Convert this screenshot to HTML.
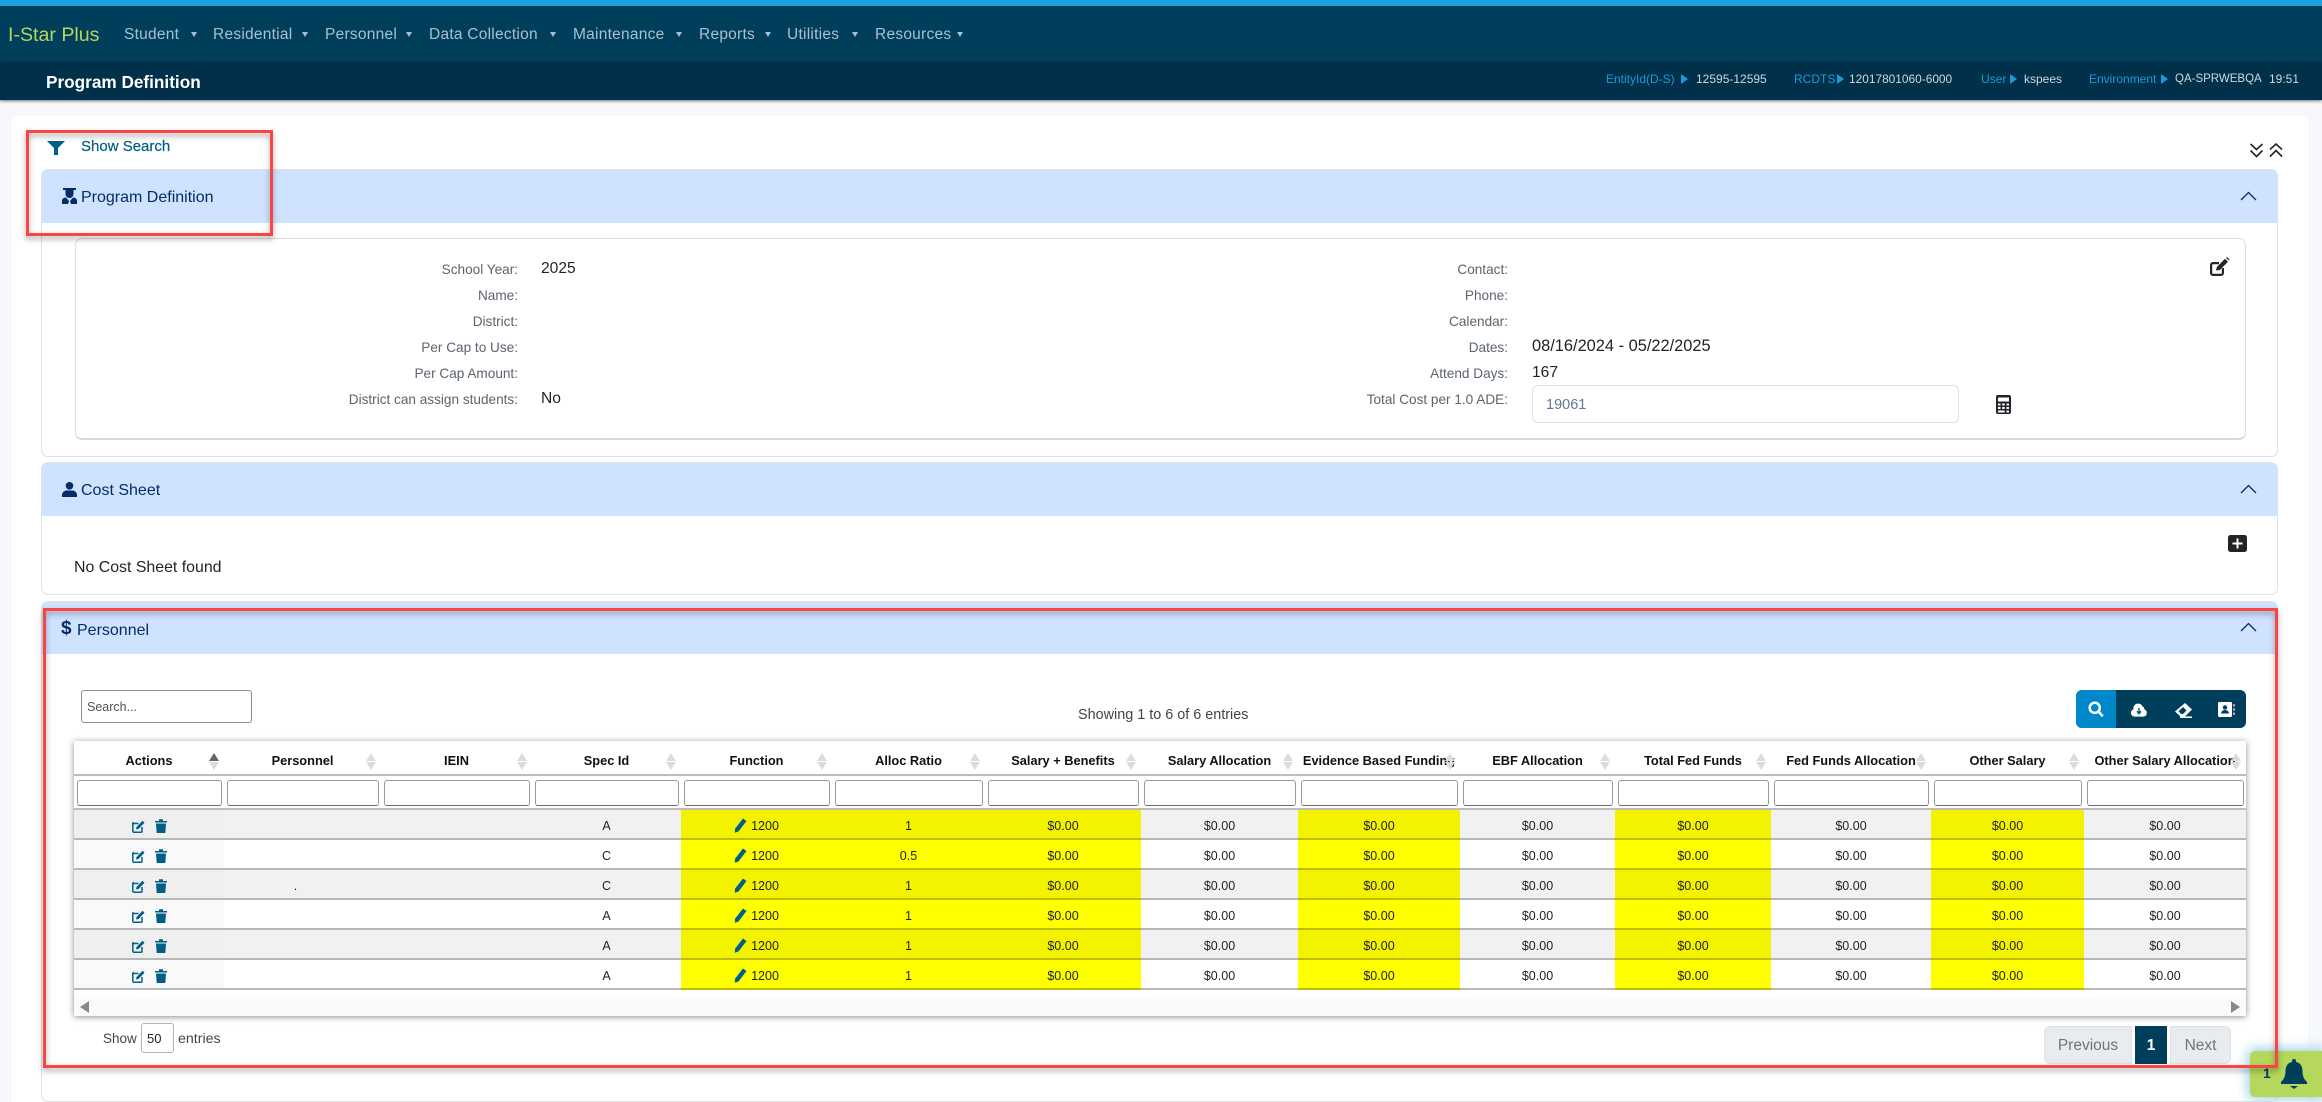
<!DOCTYPE html>
<html lang="en">
<head>
<meta charset="utf-8">
<title>Program Definition</title>
<style>
*{box-sizing:border-box}
html,body{margin:0;padding:0}
body{width:2322px;height:1102px;overflow:hidden;position:relative;background:#f6f8fb;font-family:"Liberation Sans",sans-serif;color:#212529}
.a{position:absolute}
.t{position:absolute;white-space:nowrap;line-height:20px;height:20px}
svg{display:block}
.nav{font-size:15.5px;color:#a8c0cd;top:25px;letter-spacing:.25px}
.car{position:absolute;top:32px;width:0;height:0;border-left:3.5px solid transparent;border-right:3.5px solid transparent;border-top:5px solid #a8c0cd}
.ib{font-size:12px;color:#1b9ad8;top:69px}
.iv{font-size:12px;color:#ccd8de;top:69px}
.arr{position:absolute;top:74px;width:0;height:0;border-top:5px solid transparent;border-bottom:5px solid transparent;border-left:7px solid #1b9ad8}
.item{position:absolute;left:41px;width:2237px;border:1px solid #dee2e6;border-radius:7px;background:#fff;overflow:hidden}
.hd{position:absolute;left:0;top:0;width:100%;height:53px;background:#cfe2ff}
.ht{font-size:16px;color:#052c65}
.lb{font-size:13.6px;color:#5b646e;text-align:right;width:300px}
.lr{left:218px}
.lr2{left:1208px}
.vl{font-size:15.6px;color:#212529}
.red{position:absolute;border:3px solid #fb4545;filter:drop-shadow(0 3px 3px rgba(0,0,0,.38))}
#tb{position:absolute;left:74px;top:741px;width:2172px;height:275px;background:#fff;box-shadow:0 1px 6px rgba(0,0,0,.45)}
table{border-collapse:separate;border-spacing:0;table-layout:fixed;width:2172px;position:absolute;left:0;top:0}
th{height:35px;border-bottom:2px solid #bdbdbd;font-size:12.8px;font-weight:700;color:#111;text-align:center;padding:6px 0 0;position:relative;white-space:nowrap}
th i{position:absolute;right:5px;top:12px;width:10px;height:18px}
th i:before,th i:after{content:"";position:absolute;left:0;width:0;height:0;border-left:5px solid transparent;border-right:5px solid transparent}
th i:before{top:0;border-bottom:8px solid #dcdcdc}
th i:after{top:9px;border-top:8px solid #dcdcdc}
th.s i:before{border-bottom-color:#666}
.f td{height:34px;border-bottom:2px solid #bdbdbd;padding:0;background:#fff}
.f span{display:block;height:26px;margin:0 2.5px;border:1px solid #9a9a9a;border-bottom-color:#6d6d6d;border-radius:3px;background:#fff;position:relative;top:1px}
.r td{height:30px;border-bottom:2px solid #b8b8b8;padding:3px 0 0;font-size:12.5px;line-height:14px;color:#222;text-align:center;background:#fff;white-space:nowrap}
.r:nth-child(odd) td{background:#f1f1f1}
.r td.so{background:#f9f9f9}
.r:nth-child(odd) td.so{background:#efefef}
.r td.y{background:#ff0;border-bottom-color:#bdbd00}
.r:nth-child(odd) td.y{background:#f3f300}
.r svg{display:inline-block;vertical-align:0;margin-top:-3px;margin-bottom:-3px}
.pg{position:absolute;top:1026px;height:38px;line-height:38px;text-align:center;font-size:15.5px;color:#6c757d;background:#e9ecef;border:1px solid #dee2e6}
</style>
</head>
<body>
<!-- top bars -->
<div class="a" style="left:0;top:0;width:2322px;height:6px;background:#1ba3df"></div>
<div class="a" style="left:0;top:6px;width:2322px;height:56px;background:#003f5c"></div>
<div class="a" style="left:0;top:62px;width:2322px;height:38px;background:#00304a;box-shadow:0 1px 3px rgba(0,0,0,.55)"></div>

<div class="t" style="left:8px;top:25px;font-size:19.6px;color:#b4d55c">I-Star Plus</div>
<div class="t nav" style="left:124px">Student</div><div class="car" style="left:191px"></div>
<div class="t nav" style="left:213px">Residential</div><div class="car" style="left:302px"></div>
<div class="t nav" style="left:325px">Personnel</div><div class="car" style="left:406px"></div>
<div class="t nav" style="left:429px">Data Collection</div><div class="car" style="left:550px"></div>
<div class="t nav" style="left:573px">Maintenance</div><div class="car" style="left:676px"></div>
<div class="t nav" style="left:699px">Reports</div><div class="car" style="left:765px"></div>
<div class="t nav" style="left:787px">Utilities</div><div class="car" style="left:852px"></div>
<div class="t nav" style="left:875px">Resources</div><div class="car" style="left:957px"></div>

<div class="t" style="left:46px;top:72px;font-size:17.2px;font-weight:700;color:#fff">Program Definition</div>

<div class="t ib" style="left:1606px">EntityId(D-S)</div><div class="arr" style="left:1681px"></div>
<div class="t iv" style="left:1696px">12595-12595</div>
<div class="t ib" style="left:1794px">RCDTS</div><div class="arr" style="left:1837px"></div>
<div class="t iv" style="left:1849px;font-size:11.9px">12017801060-6000</div>
<div class="t ib" style="left:1981px">User</div><div class="arr" style="left:2010px"></div>
<div class="t iv" style="left:2024px">kspees</div>
<div class="t ib" style="left:2089px">Environment</div><div class="arr" style="left:2161px"></div>
<div class="t iv" style="left:2175px;font-size:11.5px">QA-SPRWEBQA</div>
<div class="t iv" style="left:2269px">19:51</div>

<!-- main card -->
<div class="a" style="left:12px;top:116px;width:2296px;height:986px;background:#fff;border-radius:7px 7px 0 0"></div>

<!-- show search -->
<svg class="a" style="left:47px;top:141px" width="18" height="14" viewBox="0 0 18 14"><path d="M0 0H18L11 7V14H7V7Z" fill="#00607f"/></svg>
<div class="t" style="left:81px;top:137px;font-size:15px;color:#00607f;-webkit-text-stroke:.2px #00607f">Show Search</div>

<!-- double chevrons -->
<svg class="a" style="left:2249px;top:143px" width="36" height="15" viewBox="0 0 36 15" fill="none" stroke="#212529" stroke-width="1.6"><path d="M1.500 1L7.500 6.500L13.500 1M1.500 7.500L7.500 13.500L13.500 7.500"/><path d="M21 6.500L27 1L33 6.500M21 13.500L27 7.500L33 13.500"/></svg>

<!-- item 1 -->
<div class="item" style="top:169px;height:288px">
  <div class="hd"></div>
</div>
<svg class="a" style="left:62px;top:188px" width="15" height="16" viewBox="0 0 15 16" fill="#052c65"><path d="M1 0H14V2H11.500V6A4 4 0 0 1 3.500 6V2H1Z"/><path d="M0 16V13C0 10.500 2 9.500 4 9.500L7 13L6 16ZM15 16V13C15 10.500 13 9.500 11 9.500L8 13L9 16Z"/></svg>
<div class="t ht" style="left:81px;top:188px">Program Definition</div>
<svg class="a" style="left:2240px;top:191px" width="17" height="10" viewBox="0 0 17 10" fill="none" stroke="#052c65" stroke-width="1.300"><path d="M1 9L8.500 1.500L16 9"/></svg>

<div class="a" style="left:75px;top:238px;width:2171px;height:202px;border:1px solid #dcdee0;border-bottom:2px solid #d6d8da;border-radius:7px;background:#fff"></div>
<div class="t lb lr" style="top:260px">School Year:</div>
<div class="t lb lr" style="top:286px">Name:</div>
<div class="t lb lr" style="top:312px">District:</div>
<div class="t lb lr" style="top:338px">Per Cap to Use:</div>
<div class="t lb lr" style="top:364px">Per Cap Amount:</div>
<div class="t lb lr" style="top:390px">District can assign students:</div>
<div class="t vl" style="left:541px;top:259px">2025</div>
<div class="t vl" style="left:541px;top:389px">No</div>
<div class="t lb lr2" style="top:260px">Contact:</div>
<div class="t lb lr2" style="top:286px">Phone:</div>
<div class="t lb lr2" style="top:312px">Calendar:</div>
<div class="t lb lr2" style="top:338px">Dates:</div>
<div class="t lb lr2" style="top:364px">Attend Days:</div>
<div class="t lb lr2" style="top:390px">Total Cost per 1.0 ADE:</div>
<div class="t vl" style="left:1532px;top:336px;font-size:16.4px">08/16/2024 - 05/22/2025</div>
<div class="t vl" style="left:1532px;top:363px">167</div>
<div class="a" style="left:1532px;top:385px;width:427px;height:38px;border:1px solid #dee2e6;border-radius:6px;background:#fff"></div>
<div class="t" style="left:1546px;top:395px;font-size:14.500px;color:#66758f">19061</div>
<svg class="a" style="left:1996px;top:395px" width="15" height="19" viewBox="0 0 15 19"><rect width="15" height="19" rx="2" fill="#212529"/><rect x="2" y="2.500" width="11" height="4" fill="#fff"/><g fill="#fff"><rect x="2" y="8.500" width="2.500" height="2"/><rect x="6.200" y="8.500" width="2.500" height="2"/><rect x="10.500" y="8.500" width="2.500" height="2"/><rect x="2" y="12" width="2.500" height="2"/><rect x="6.200" y="12" width="2.500" height="2"/><rect x="10.500" y="12" width="2.500" height="2"/><rect x="2" y="15.500" width="6.700" height="2"/><rect x="10.500" y="15.500" width="2.500" height="2"/></g></svg>
<svg class="a" style="left:2209px;top:257px" width="21" height="20" viewBox="0 0 21 20"><path d="M1 8A3 3 0 0 1 4 5H10V7.200H4A.8.800 0 0 0 3.200 8V16A.8.800 0 0 0 4 16.800H12A.8.800 0 0 0 12.800 16V11H15V16A3 3 0 0 1 12 19H4A3 3 0 0 1 1 16Z" fill="#212529"/><path d="M7 13.500L7.800 10L16 1.800L19 4.800L10.800 13Z" fill="#212529"/><path d="M17 .8L18 0L20.500 2.500L19.800 3.500Z" fill="#212529"/></svg>

<!-- item 2 -->
<div class="item" style="top:462px;height:133px">
  <div class="hd"></div>
</div>
<svg class="a" style="left:62px;top:482px" width="15" height="15" viewBox="0 0 15 15" fill="#052c65"><circle cx="7.500" cy="3.800" r="3.800"/><path d="M0 15V13A4.500 4.500 0 0 1 4.500 8.500H10.500A4.500 4.500 0 0 1 15 13V15Z"/></svg>
<div class="t ht" style="left:81px;top:481px">Cost Sheet</div>
<svg class="a" style="left:2240px;top:484px" width="17" height="10" viewBox="0 0 17 10" fill="none" stroke="#052c65" stroke-width="1.300"><path d="M1 9L8.500 1.500L16 9"/></svg>
<div class="t vl" style="left:74px;top:558px;font-size:15.9px">No Cost Sheet found</div>
<svg class="a" style="left:2228px;top:535px" width="19" height="17" viewBox="0 0 19 17"><rect width="19" height="17" rx="2.500" fill="#212529"/><path d="M9.500 3.500V13.500M4.500 8.500H14.500" stroke="#fff" stroke-width="2"/></svg>

<!-- item 3 -->
<div class="item" style="top:601px;height:501px">
  <div class="hd" style="height:52px"></div>
</div>
<div class="t" style="left:61px;top:619px;font-size:19px;color:#052c65;font-weight:700;width:11px">$</div>
<div class="t ht" style="left:77px;top:621px">Personnel</div>
<svg class="a" style="left:2240px;top:622px" width="17" height="10" viewBox="0 0 17 10" fill="none" stroke="#052c65" stroke-width="1.300"><path d="M1 9L8.500 1.500L16 9"/></svg>

<div class="a" style="left:81px;top:690px;width:171px;height:33px;border:1px solid #8d8d8d;border-radius:3px;background:#fff"></div>
<div class="t" style="left:87px;top:697px;font-size:12.500px;color:#555">Search...</div>
<div class="t" style="left:1078px;top:705px;font-size:14.4px;color:#444">Showing 1 to 6 of 6 entries</div>

<div class="a" style="left:2076px;top:690px;width:170px;height:38px;background:#003f5c;border-radius:6px;overflow:hidden">
  <div class="a" style="left:0;top:0;width:40px;height:38px;background:#0088cb"></div>
</div>
<svg class="a" style="left:2088px;top:701px" width="16" height="17" viewBox="0 0 19 20" fill="none" stroke="#fff" stroke-width="3"><circle cx="8" cy="8" r="6"/><path d="M12.500 12.500L17.500 18"/></svg>
<svg class="a" style="left:2129px;top:703px" width="20" height="14" viewBox="0 0 21 17"><path d="M5 16.500A4.500 4.500 0 0 1 3.800 7.700A5.500 5.500 0 0 1 9 .8A5 5 0 0 1 14.500 4A4 4 0 0 1 17 7.800A4.500 4.500 0 0 1 16 16.500Z" fill="#fff"/><path d="M10.500 6V12M8 10L10.500 13L13 10" fill="none" stroke="#0b5f83" stroke-width="1.800"/></svg>
<svg class="a" style="left:2175px;top:703px" width="18" height="15" viewBox="0 0 18 15"><path d="M10 0L17 6.500L10 13.500H5.500L0 8.500Z" fill="#fff"/><path d="M3.500 8.200L8 4L11.500 7.500L8 11H6.200Z" fill="#003f5c"/><path d="M5 14.200H17" stroke="#fff" stroke-width="1.500"/></svg>
<svg class="a" style="left:2218px;top:702px" width="18" height="15" viewBox="0 0 18 15"><rect x="0" y="0" width="14" height="15" rx="1.200" fill="#fff"/><circle cx="7" cy="5.500" r="2.200" fill="#003f5c"/><path d="M3 11.500A4 3.500 0 0 1 11 11.500Z" fill="#003f5c"/><path d="M16 2V4.500M16 6.300V8.700M16 10.500V13" stroke="#e9c7de" stroke-width="1.500"/></svg>

<!-- table -->
<div id="tb">
<table>
<colgroup>
<col style="width:150px"><col style="width:157px"><col style="width:151px"><col style="width:149px"><col style="width:151px"><col style="width:153px"><col style="width:156px"><col style="width:157px"><col style="width:162px"><col style="width:155px"><col style="width:156px"><col style="width:160px"><col style="width:153px"><col style="width:162px">
</colgroup>
<thead>
<tr><th class="s">Actions<i></i></th><th>Personnel<i></i></th><th>IEIN<i></i></th><th>Spec Id<i></i></th><th>Function<i></i></th><th>Alloc Ratio<i></i></th><th>Salary + Benefits<i></i></th><th>Salary Allocation<i></i></th><th>Evidence Based Funding<i></i></th><th>EBF Allocation<i></i></th><th>Total Fed Funds<i></i></th><th>Fed Funds Allocation<i></i></th><th>Other Salary<i></i></th><th>Other Salary Allocation<i></i></th></tr>
<tr class="f"><td><span></span></td><td><span></span></td><td><span></span></td><td><span></span></td><td><span></span></td><td><span></span></td><td><span></span></td><td><span></span></td><td><span></span></td><td><span></span></td><td><span></span></td><td><span></span></td><td><span></span></td><td><span></span></td></tr>
</thead>
<tbody>
<tr class="r"><td class="so"><svg width="13" height="13" viewBox="0 0 13 13"><path d="M.8 3.500H6.500M.8 3A1 1 0 0 1 1.800 2.500M.8 3V11.200A1 1 0 0 0 1.800 12.200H9A1 1 0 0 0 10 11.200V7" fill="none" stroke="#005f86" stroke-width="1.500"/><path d="M4 9.500L4.500 7L10.500 .8L12.500 2.800L6.500 9Z" fill="#005f86"/></svg><svg width="12" height="14" viewBox="0 0 12 14" style="margin-left:10px"><path d="M0 2H12V3.500H0ZM4 .3H8V2H4ZM1 4.500H11L10.300 14H1.700Z" fill="#005f86"/></svg></td><td></td><td></td><td>A</td><td class="y"><svg width="13" height="15" viewBox="0 0 13 15" style="margin-right:4px"><path d="M9 .5L12.500 3L4.500 13.500L.8 14.800L1 10.800Z" fill="#005f86"/></svg>1200</td><td class="y">1</td><td class="y">$0.00</td><td>$0.00</td><td class="y">$0.00</td><td>$0.00</td><td class="y">$0.00</td><td>$0.00</td><td class="y">$0.00</td><td>$0.00</td></tr>
<tr class="r"><td class="so"><svg width="13" height="13" viewBox="0 0 13 13"><path d="M.8 3.500H6.500M.8 3A1 1 0 0 1 1.800 2.500M.8 3V11.200A1 1 0 0 0 1.800 12.200H9A1 1 0 0 0 10 11.200V7" fill="none" stroke="#005f86" stroke-width="1.500"/><path d="M4 9.500L4.500 7L10.500 .8L12.500 2.800L6.500 9Z" fill="#005f86"/></svg><svg width="12" height="14" viewBox="0 0 12 14" style="margin-left:10px"><path d="M0 2H12V3.500H0ZM4 .3H8V2H4ZM1 4.500H11L10.300 14H1.700Z" fill="#005f86"/></svg></td><td></td><td></td><td>C</td><td class="y"><svg width="13" height="15" viewBox="0 0 13 15" style="margin-right:4px"><path d="M9 .5L12.500 3L4.500 13.500L.8 14.800L1 10.800Z" fill="#005f86"/></svg>1200</td><td class="y">0.5</td><td class="y">$0.00</td><td>$0.00</td><td class="y">$0.00</td><td>$0.00</td><td class="y">$0.00</td><td>$0.00</td><td class="y">$0.00</td><td>$0.00</td></tr>
<tr class="r"><td class="so"><svg width="13" height="13" viewBox="0 0 13 13"><path d="M.8 3.500H6.500M.8 3A1 1 0 0 1 1.800 2.500M.8 3V11.200A1 1 0 0 0 1.800 12.200H9A1 1 0 0 0 10 11.200V7" fill="none" stroke="#005f86" stroke-width="1.500"/><path d="M4 9.500L4.500 7L10.500 .8L12.500 2.800L6.500 9Z" fill="#005f86"/></svg><svg width="12" height="14" viewBox="0 0 12 14" style="margin-left:10px"><path d="M0 2H12V3.500H0ZM4 .3H8V2H4ZM1 4.500H11L10.300 14H1.700Z" fill="#005f86"/></svg></td><td style="padding-right:14px">.</td><td></td><td>C</td><td class="y"><svg width="13" height="15" viewBox="0 0 13 15" style="margin-right:4px"><path d="M9 .5L12.500 3L4.500 13.500L.8 14.800L1 10.800Z" fill="#005f86"/></svg>1200</td><td class="y">1</td><td class="y">$0.00</td><td>$0.00</td><td class="y">$0.00</td><td>$0.00</td><td class="y">$0.00</td><td>$0.00</td><td class="y">$0.00</td><td>$0.00</td></tr>
<tr class="r"><td class="so"><svg width="13" height="13" viewBox="0 0 13 13"><path d="M.8 3.500H6.500M.8 3A1 1 0 0 1 1.800 2.500M.8 3V11.200A1 1 0 0 0 1.800 12.200H9A1 1 0 0 0 10 11.200V7" fill="none" stroke="#005f86" stroke-width="1.500"/><path d="M4 9.500L4.500 7L10.500 .8L12.500 2.800L6.500 9Z" fill="#005f86"/></svg><svg width="12" height="14" viewBox="0 0 12 14" style="margin-left:10px"><path d="M0 2H12V3.500H0ZM4 .3H8V2H4ZM1 4.500H11L10.300 14H1.700Z" fill="#005f86"/></svg></td><td></td><td></td><td>A</td><td class="y"><svg width="13" height="15" viewBox="0 0 13 15" style="margin-right:4px"><path d="M9 .5L12.500 3L4.500 13.500L.8 14.800L1 10.800Z" fill="#005f86"/></svg>1200</td><td class="y">1</td><td class="y">$0.00</td><td>$0.00</td><td class="y">$0.00</td><td>$0.00</td><td class="y">$0.00</td><td>$0.00</td><td class="y">$0.00</td><td>$0.00</td></tr>
<tr class="r"><td class="so"><svg width="13" height="13" viewBox="0 0 13 13"><path d="M.8 3.500H6.500M.8 3A1 1 0 0 1 1.800 2.500M.8 3V11.200A1 1 0 0 0 1.800 12.200H9A1 1 0 0 0 10 11.200V7" fill="none" stroke="#005f86" stroke-width="1.500"/><path d="M4 9.500L4.500 7L10.500 .8L12.500 2.800L6.500 9Z" fill="#005f86"/></svg><svg width="12" height="14" viewBox="0 0 12 14" style="margin-left:10px"><path d="M0 2H12V3.500H0ZM4 .3H8V2H4ZM1 4.500H11L10.300 14H1.700Z" fill="#005f86"/></svg></td><td></td><td></td><td>A</td><td class="y"><svg width="13" height="15" viewBox="0 0 13 15" style="margin-right:4px"><path d="M9 .5L12.500 3L4.500 13.500L.8 14.800L1 10.800Z" fill="#005f86"/></svg>1200</td><td class="y">1</td><td class="y">$0.00</td><td>$0.00</td><td class="y">$0.00</td><td>$0.00</td><td class="y">$0.00</td><td>$0.00</td><td class="y">$0.00</td><td>$0.00</td></tr>
<tr class="r"><td class="so"><svg width="13" height="13" viewBox="0 0 13 13"><path d="M.8 3.500H6.500M.8 3A1 1 0 0 1 1.800 2.500M.8 3V11.200A1 1 0 0 0 1.800 12.200H9A1 1 0 0 0 10 11.200V7" fill="none" stroke="#005f86" stroke-width="1.500"/><path d="M4 9.500L4.500 7L10.500 .8L12.500 2.800L6.500 9Z" fill="#005f86"/></svg><svg width="12" height="14" viewBox="0 0 12 14" style="margin-left:10px"><path d="M0 2H12V3.500H0ZM4 .3H8V2H4ZM1 4.500H11L10.300 14H1.700Z" fill="#005f86"/></svg></td><td></td><td></td><td>A</td><td class="y"><svg width="13" height="15" viewBox="0 0 13 15" style="margin-right:4px"><path d="M9 .5L12.500 3L4.500 13.500L.8 14.800L1 10.800Z" fill="#005f86"/></svg>1200</td><td class="y">1</td><td class="y">$0.00</td><td>$0.00</td><td class="y">$0.00</td><td>$0.00</td><td class="y">$0.00</td><td>$0.00</td><td class="y">$0.00</td><td>$0.00</td></tr>
</tbody>
</table>
<div class="a" style="left:0;top:256px;width:2172px;height:19px;background:#fafafa"></div>
<div class="a" style="left:6px;top:260px;width:0;height:0;border-top:6px solid transparent;border-bottom:6px solid transparent;border-right:9px solid #888"></div>
<div class="a" style="left:2157px;top:260px;width:0;height:0;border-top:6px solid transparent;border-bottom:6px solid transparent;border-left:9px solid #888"></div>
</div>

<!-- footer of table -->
<div class="t" style="left:103px;top:1029px;font-size:13.500px;color:#444">Show</div>
<div class="a" style="left:141px;top:1023px;width:33px;height:30px;border:1px solid #b4b4b4;border-radius:3px;background:#fff"></div>
<div class="t" style="left:147px;top:1029px;font-size:13px;color:#222">50</div>
<div class="t" style="left:178px;top:1029px;font-size:14.2px;color:#444">entries</div>

<div class="pg" style="left:2044px;width:88px;border-radius:6px 0 0 6px">Previous</div>
<div class="pg" style="left:2135px;width:32px;background:#003f5c;border-color:#003f5c;color:#fff;font-weight:700">1</div>
<div class="pg" style="left:2170px;width:61px;border-radius:0 6px 6px 0">Next</div>

<!-- bell widget -->
<div class="a" style="left:2250px;top:1051px;width:72px;height:46px;background:#b4d75c;border-radius:5px 0 0 5px;box-shadow:0 0 11px 3px #9fd7e8"></div>
<div class="t" style="left:2263px;top:1063px;font-size:14px;font-weight:700;color:#003f5c">1</div>
<svg class="a" style="left:2281px;top:1059px" width="26" height="30" viewBox="0 0 26 30" fill="#003f5c"><path d="M13 0A2 2 0 0 1 15 2V3C19.500 3.800 21.500 7.500 21.500 12C21.500 18 23.500 20.500 26 23V25H0V23C2.500 20.500 4.500 18 4.500 12C4.500 7.500 6.500 3.800 11 3V2A2 2 0 0 1 13 0Z"/><path d="M9 27H17L13 30Z"/></svg>

<!-- annotation boxes -->
<div class="red" style="left:26px;top:130px;width:247px;height:106px"></div>
<div class="red" style="left:43px;top:608px;width:2235px;height:460px"></div>
</body>
</html>
